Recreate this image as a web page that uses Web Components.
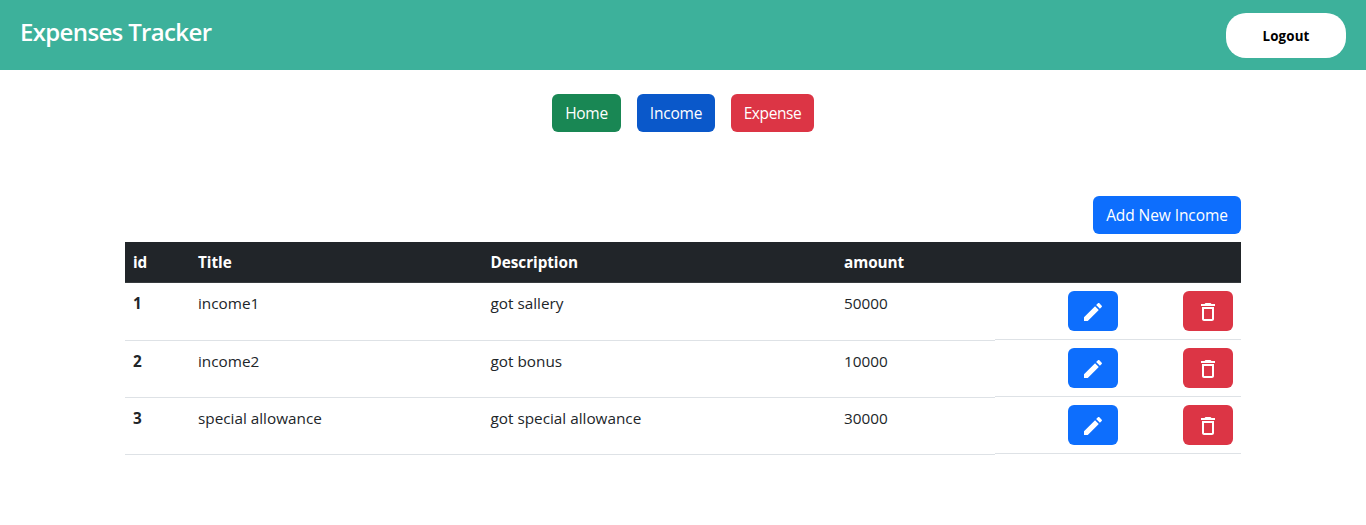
<!DOCTYPE html>
<html lang="en">
<head>
<meta charset="utf-8">
<title>Expenses Tracker</title>
<style>
body { margin: 0; background: #fff; color: #212529; font: 16px/24px "Open Sans", "Noto Sans", sans-serif; }
</style>
</head>
<body>
<expense-app></expense-app>
<script>
const define = (name, html, setup) => customElements.define(name, class extends HTMLElement {
  constructor() {
    super();
    this.attachShadow({ mode: "open" }).innerHTML = html;
  }
  connectedCallback() { if (setup) setup(this); }
});

define("app-button", `
<style>
:host { display: inline-flex; flex: none; width: var(--w); height: 38px; border-radius: 6px; background: var(--bg); color: #fff; }
button { all: unset; flex: 1; display: flex; align-items: center; justify-content: center; white-space: nowrap; cursor: pointer; letter-spacing: var(--ls, 0); font-size: 15.5px; padding-bottom: 1px; }
</style>
<button><slot></slot></button>`);

define("app-header", `
<style>
:host { display: flex; box-sizing: border-box; height: 70px; padding: 13px 20px 12px; justify-content: space-between; background: #3db19b; }
h1 { margin: 3px 0 0; color: #fff; font-size: 24px; line-height: 32px; font-weight: 600; letter-spacing: -0.65px; white-space: nowrap; }
button { all: unset; box-sizing: border-box; width: 120px; height: 45px; border-radius: 20px; background: #fff; color: #000; font-size: 13.33px; font-weight: 700; text-align: center; cursor: pointer; padding-top: 1px; letter-spacing: .15px; }
</style>
<h1><slot></slot></h1><button>Logout</button>`);

define("app-nav", `
<style>
:host { display: flex; justify-content: center; gap: 16px; padding-top: 24px; }
</style>
<app-button style="--w:69px;--bg:#198754;--ls:-.3px">Home</app-button>
<app-button style="--w:78px;--bg:#0a58ca;--ls:-.2px">Income</app-button>
<app-button style="--w:83px;--bg:#dc3545;--ls:-.4px">Expense</app-button>`);

define("icon-button", `
<style>
:host { display: flex; width: 50px; height: 40px; border-radius: 6px; background: var(--bg); }
button { all: unset; flex: 1; display: flex; align-items: center; justify-content: center; cursor: pointer; padding-top: 2px; }
svg { width: 24px; height: 24px; fill: #fff; display: block; }
</style>
<button><svg viewBox="0 0 24 24"><path/></svg></button>`, el => {
  const edit = el.getAttribute("icon") === "edit";
  el.style.setProperty("--bg", edit ? "#0d6efd" : "#dc3545");
  el.shadowRoot.querySelector("button").setAttribute("aria-label", edit ? "Edit" : "Delete");
  el.shadowRoot.querySelector("path").setAttribute("d", edit
    ? "M3 17.25V21h3.75L17.81 9.94l-3.75-3.75L3 17.25zM20.71 7.04c.39-.39.39-1.02 0-1.41l-2.34-2.34c-.39-.39-1.02-.39-1.41 0l-1.83 1.83 3.75 3.75 1.83-1.83z"
    : "M6 19c0 1.100.9 2 2 2h8c1.100 0 2-.9 2-2V7H6v12zM8 9h8v10H8V9zm7.500-5l-1-1h-5l-1 1H5v2h14V4h-3.500z");
});

define("income-row", `
<style>
:host { display: grid; grid-template-columns: 65px 292.5px 353.5px 159px 1fr; height: 57px; }
.cell { box-sizing: border-box; height: 58px; padding: 9px 8px 0; border-bottom: 1px solid #dee2e6; font-size: 15.3px; letter-spacing: 0; white-space: nowrap; }
:host(:first-of-type) .cell { padding-top: 8px; }
:host(:last-of-type) { height: 58px; }
.id { font-weight: 700; }
.actions { box-sizing: border-box; height: 57px; padding: 8px; display: flex; justify-content: flex-end; gap: 65px; border-bottom: 1px solid #dee2e6; }
</style>
<div class="cell id"><slot name="id"></slot></div>
<div class="cell"><slot name="title"></slot></div>
<div class="cell"><slot name="description"></slot></div>
<div class="cell"><slot name="amount"></slot></div>
<div class="actions"><icon-button icon="edit"></icon-button><icon-button icon="delete"></icon-button></div>`);

define("income-table", `
<style>
:host { display: block; }
header { box-sizing: border-box; display: grid; grid-template-columns: 65px 292.5px 353.5px 159px 1fr; height: 41px; border-bottom: 1px solid #373b3e; background: #212529; color: #fff; font-weight: 700; font-size: 15.3px; letter-spacing: -.05px; }
header div { padding: 8px 8px 0; }
</style>
<header><div>id</div><div>Title</div><div>Description</div><div>amount</div><div></div></header>
<slot></slot>`);

define("expense-app", `
<style>
:host { display: block; }
main { width: 1116px; margin: 64px auto 0; }
.toolbar { display: flex; justify-content: flex-end; margin-bottom: 8px; }
</style>
<app-header>Expenses Tracker</app-header>
<app-nav></app-nav>
<main>
<div class="toolbar"><app-button style="--w:148px;--bg:#0d6efd;--ls:-.08px">Add New Income</app-button></div>
<income-table>
<income-row><span slot="id">1</span><span slot="title">income1</span><span slot="description">got sallery</span><span slot="amount">50000</span></income-row>
<income-row><span slot="id">2</span><span slot="title">income2</span><span slot="description">got bonus</span><span slot="amount">10000</span></income-row>
<income-row><span slot="id">3</span><span slot="title">special allowance</span><span slot="description">got special allowance</span><span slot="amount">30000</span></income-row>
</income-table>
</main>`);
</script>
</body>
</html>
